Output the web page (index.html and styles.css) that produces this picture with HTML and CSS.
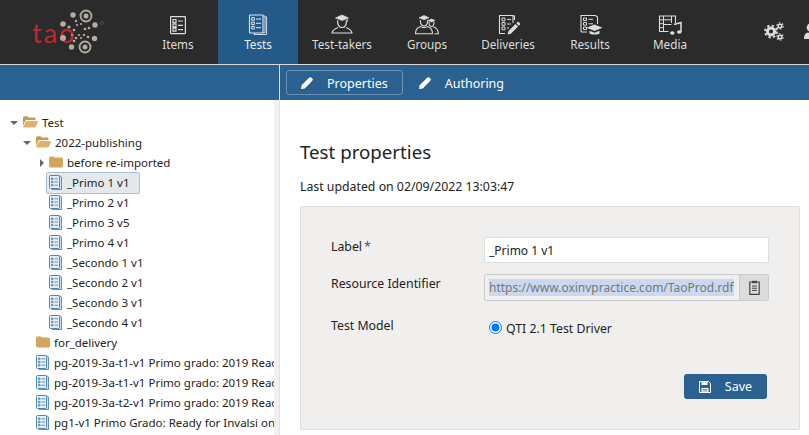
FILE: index.html
```html
<!DOCTYPE html>
<html lang="en">

<head>
  <meta charset="UTF-8">
  <meta name="viewport" content="width=device-width, initial-scale=1.0">
  <title>TAO - Tests</title>
  <link rel="stylesheet" href="styles.css">
</head>

<body>
  <!-- shared icons -->
  <svg class="defs" width="0" height="0">
    <symbol id="i-test" viewBox="0 0 13 15">
      <path d="M3 1h8l1.500 1v12.500H3z" fill="#cfe0ee" stroke="#5b8fb9"/>
      <rect x="0.500" y="0.500" width="10" height="13" rx="1" fill="#e8f0f6" stroke="#4f87b3"/>
      <path d="M2.500 3h1.500v1.500H2.500zM2.500 6.200h1.500v1.500H2.500zM2.500 9.400h1.500v1.500H2.500zM5.500 3.800h3.500M5.500 7h3.500M5.500 10.200h3.500" fill="none" stroke="#5b8fb9"/>
    </symbol>
    <symbol id="i-folder" viewBox="0 0 14 12">
      <path d="M0 2.200C0 1 .8.400 1.800.400h2.600c.8 0 1.200.9 2 1.200h5.800c1 0 1.800.7 1.800 1.800v6.400c0 1-.8 1.800-1.800 1.800H1.800C.8 11.600 0 10.800 0 9.800z" fill="#d2a65c"/>
    </symbol>
    <symbol id="i-folder-open" viewBox="0 0 15 12">
      <path d="M0 2C0 1 .7.300 1.600.300h2.500c.8 0 1.300.9 2 1.200h5c.9 0 1.500.6 1.500 1.500V4H4.200C3 4 2.300 4.700 1.900 5.700L0 10z" fill="#c99a4e"/>
      <path d="M4.400 5H14c.7 0 1.100.6.800 1.200l-2 4.500c-.3.6-.8.9-1.500.9H1c-.6 0-1-.5-.7-1.100l2.400-4.400C3 5.300 3.600 5 4.400 5z" fill="#dcb26c"/>
    </symbol>
    <symbol id="i-pencil" viewBox="0 0 12 12">
      <path d="M0 12l.6-3.800L7.400 1.400l3.200 3.200-6.800 6.800zM8.400.6c.6-.6 1.300-.6 1.800-.1l1.300 1.300c.5.500.5 1.200-.1 1.800l-.9.900L7.300 1.700z" fill="#fff"/>
    </symbol>
  </svg>

  <header class="topbar">
    <a class="logo" href="#">
      <svg width="110" height="64" viewBox="0 0 110 64">
        <text x="32" y="43" class="logo-text">tao</text>
        <g fill="none" stroke="#b5aca0">
          <circle cx="86" cy="16" r="5.500" stroke-width="1.800"/>
          <circle cx="85" cy="47" r="5.500" stroke-width="1.800"/>
        </g>
        <g fill="#b5aca0">
          <circle cx="86" cy="16" r="2.500"/>
          <circle cx="85" cy="47" r="2.500"/>
          <circle cx="63" cy="38" r="3"/>
          <circle cx="73" cy="15" r="2.700"/>
          <circle cx="63" cy="24" r="2.800"/>
          <circle cx="95" cy="25" r="2.700"/>
          <circle cx="94.500" cy="38.500" r="2.700"/>
          <circle cx="71.500" cy="47" r="2.700"/>
          <circle cx="69" cy="27" r="1.600"/>
          <circle cx="74" cy="30" r="1.300"/>
          <circle cx="76" cy="21" r="1.200"/>
          <circle cx="77" cy="25" r="1.100"/>
          <circle cx="85" cy="29" r="1.300"/>
          <circle cx="89" cy="28" r="1.300"/>
          <circle cx="81" cy="24" r="1.100"/>
          <circle cx="84" cy="35" r="1.200"/>
          <circle cx="88" cy="37" r="1.300"/>
          <circle cx="72" cy="35" r="1.100"/>
          <circle cx="76" cy="38" r="1.300"/>
          <circle cx="74" cy="41" r="1.300"/>
          <circle cx="79" cy="35" r="1.100"/>
          <circle cx="81" cy="38" r="1.100"/>
        </g>
        <circle cx="102" cy="23" r="1.500" fill="none" stroke="#5c5c5c" stroke-width=".7"/>
      </svg>
    </a>
    <nav class="main-nav">
      <a class="nav-item w-80" href="#">
        <svg class="nav-icon" width="26" height="22" viewBox="0 0 26 22">
          <g fill="none" stroke="#ddd" stroke-width="1.200">
            <rect x="5.600" y="2.600" width="14.800" height="17" rx=".5"/>
            <path d="M8 5.500h3v3H8zM8 9.800h3v3H8zM8 14.200h3v3H8zM13 7h5M13 11.300h5M13 15.700h5"/>
          </g>
        </svg>
        Items
      </a>
      <a class="nav-item w-80 active" href="#">
        <svg class="nav-icon" width="26" height="22" viewBox="0 0 26 22">
          <path d="M20 3h1.600v17.500H9V19" fill="none" stroke="#cfdde9"/>
          <path d="M18 2h2v16.500H18" fill="none" stroke="#cfdde9"/>
          <rect x="4.500" y="1" width="13.500" height="18" rx=".5" fill="#245a87" stroke="#dde7f0" stroke-width="1.100"/>
          <path d="M6.700 3.600h2.600v2.600H6.700zM6.700 8h2.600v2.600H6.700zM6.700 12.400h2.600V15H6.700zM11 5h5M11 9.300h5M11 13.700h5" fill="none" stroke="#dde7f0"/>
        </svg>
        Tests
      </a>
      <a class="nav-item w-88" href="#">
        <svg class="nav-icon" width="26" height="22" viewBox="0 0 26 22">
          <path d="M13 1l6.500 3-6.500 2.500L6.500 4zM18.500 4.800v3" fill="#ddd" stroke="#ddd" stroke-width=".7"/>
          <path d="M8.500 6.200c0 5 1.800 7.300 4.500 7.300s4.500-2.300 4.500-7.300" fill="none" stroke="#ddd" stroke-width="1.200"/>
          <path d="M9 13.500c-2 .8-5.500 2.500-6 5.500h20c-.5-3-4-4.700-6-5.500M13 17.500" fill="none" stroke="#ddd" stroke-width="1.200"/>
        </svg>
        Test-takers
      </a>
      <a class="nav-item w-82" href="#">
        <svg class="nav-icon" width="26" height="22" viewBox="0 0 26 22">
          <path d="M10 1.500l5 2.300-5 2-5-2zM17.500 5l3.600 1.500L17.500 8 14 6.500z" fill="#ddd" stroke="#ddd" stroke-width=".6"/>
          <path d="M6.300 6c0 4 1.500 6 3.700 6s3.700-2 3.700-6M15 8c0 3 1 4.500 2.500 4.500S20 11 20 8" fill="none" stroke="#ddd" stroke-width="1.100"/>
          <path d="M1.500 19.800c0-3.800 2.400-6.300 5-7.200 2 1.200 5 1.200 7 0 2.600.9 5 3.400 5 7.200zM19.500 13c2.700.6 4.700 2.800 5 6.800h-4" fill="none" stroke="#ddd" stroke-width="1.100"/>
        </svg>
        Groups
      </a>
      <a class="nav-item w-80" href="#">
        <svg class="nav-icon" width="26" height="22" viewBox="0 0 26 22">
          <path d="M18 9V2h1.500v4M10 19.500H4.500V1.500H18v1M16 19.500h-2" fill="none" stroke="#ddd" stroke-width="1.100"/>
          <path d="M7 4h3v2.800H7zM7 8.500h3v2.800H7zM7 13h3v2.800H7zM12 5.400h4M12 10h4M12 14h2" fill="none" stroke="#ddd"/>
          <path d="M12.500 20.500l1-3.500 7-7 2.600 2.600-7 7zM21.300 9.200l1-1c.5-.5 1-.5 1.500 0l1 1c.5.500.5 1 0 1.500l-1 1z" fill="#ddd"/>
        </svg>
        Deliveries
      </a>
      <a class="nav-item w-84" href="#">
        <svg class="nav-icon" width="28" height="22" viewBox="0 0 28 22">
          <path d="M5 18V1.500h14.500l2 1.500V10" fill="none" stroke="#ddd" stroke-width="1.100"/>
          <path d="M7.500 4h3v2.600h-3zM7.500 8.500h3v2.600h-3zM7.500 13h3v2.500h-3zM12.500 5.300h4.500M12.500 9.800h4.500" fill="none" stroke="#ddd"/>
          <path d="M18.500 10.500l8 3.200-8 3.300-8-3.300z" fill="#ddd"/>
          <path d="M13.500 16.800v2.600c1.500 1.400 8.500 1.400 10 0v-2.600l-5 2z" fill="#ddd"/>
          <path d="M5 18h6" fill="none" stroke="#ddd"/>
        </svg>
        Results
      </a>
      <a class="nav-item w-76" href="#">
        <svg class="nav-icon" width="26" height="22" viewBox="0 0 26 22">
          <path d="M18.500 9V2H2.500v15.500h9" fill="none" stroke="#ddd" stroke-width="1.100"/>
          <path d="M6.500 2v15.500M14.500 2v7M2.500 5.800h4M2.500 9.700h4M2.500 13.600h4M6.500 5.800h8M6.500 10.500h8" fill="none" stroke="#ddd"/>
          <path d="M17 10.500l7-2v9.500" fill="none" stroke="#ddd" stroke-width="1.500"/>
          <ellipse cx="15.300" cy="19" rx="2.300" ry="1.800" fill="#ddd"/>
          <ellipse cx="22.300" cy="18" rx="2.300" ry="1.800" fill="#ddd"/>
        </svg>
        Media
      </a>
    </nav>
    <div class="top-tools">
      <svg width="24" height="22" viewBox="0 0 24 22">
        <circle cx="9" cy="10.500" r="3.600" fill="none" stroke="#ddd" stroke-width="3"/>
        <circle cx="9" cy="10.500" r="6" fill="none" stroke="#ddd" stroke-width="1.800" stroke-dasharray="2.400 2.310"/>
        <circle cx="18" cy="5" r="1.800" fill="none" stroke="#ddd" stroke-width="1.500"/>
        <circle cx="18" cy="5" r="3.200" fill="none" stroke="#ddd" stroke-width="1.100" stroke-dasharray="1.700 1.650"/>
        <circle cx="18" cy="16" r="1.800" fill="none" stroke="#ddd" stroke-width="1.500"/>
        <circle cx="18" cy="16" r="3.200" fill="none" stroke="#ddd" stroke-width="1.100" stroke-dasharray="1.700 1.650"/>
      </svg>
      <svg width="16" height="22" viewBox="0 0 16 22">
        <circle cx="8" cy="6.500" r="4.300" fill="#ddd"/>
        <path d="M1 18c0-4.500 2-6 4-6.500 2 1.300 4.500 1.300 6.500 0 2 .5 4.500 2 4.500 6.500z" fill="#ddd"/>
      </svg>
    </div>
  </header>

  <div class="action-bar">
    <div class="action-spacer"></div>
    <div class="actions">
      <a class="action-btn active" href="#">
        <svg width="12" height="12"><use href="#i-pencil"/></svg>
        Properties
      </a>
      <a class="action-btn" href="#">
        <svg width="12" height="12"><use href="#i-pencil"/></svg>
        Authoring
      </a>
    </div>
  </div>

  <div class="workspace">
    <aside class="sidebar">
      <ul class="tree">
        <li class="row lvl-0"><span class="caret down"></span><svg class="ico-folder" width="15" height="12"><use href="#i-folder-open"/></svg>Test</li>
        <li class="row lvl-1"><span class="caret down"></span><svg class="ico-folder" width="15" height="12"><use href="#i-folder-open"/></svg>2022-publishing</li>
        <li class="row lvl-2"><span class="caret right"></span><svg class="ico-folder" width="14" height="12"><use href="#i-folder"/></svg>before re-imported</li>
        <li class="row lvl-3 selected"><svg class="ico-test" width="13" height="15"><use href="#i-test"/></svg>_Primo 1 v1</li>
        <li class="row lvl-3"><svg class="ico-test" width="13" height="15"><use href="#i-test"/></svg>_Primo 2 v1</li>
        <li class="row lvl-3"><svg class="ico-test" width="13" height="15"><use href="#i-test"/></svg>_Primo 3 v5</li>
        <li class="row lvl-3"><svg class="ico-test" width="13" height="15"><use href="#i-test"/></svg>_Primo 4 v1</li>
        <li class="row lvl-3"><svg class="ico-test" width="13" height="15"><use href="#i-test"/></svg>_Secondo 1 v1</li>
        <li class="row lvl-3"><svg class="ico-test" width="13" height="15"><use href="#i-test"/></svg>_Secondo 2 v1</li>
        <li class="row lvl-3"><svg class="ico-test" width="13" height="15"><use href="#i-test"/></svg>_Secondo 3 v1</li>
        <li class="row lvl-3"><svg class="ico-test" width="13" height="15"><use href="#i-test"/></svg>_Secondo 4 v1</li>
        <li class="row lvl-4"><svg class="ico-folder" width="14" height="12"><use href="#i-folder"/></svg>for_delivery</li>
        <li class="row lvl-4"><svg class="ico-test" width="13" height="15"><use href="#i-test"/></svg>pg-2019-3a-t1-v1 Primo grado: 2019 Ready for Invalsi</li>
        <li class="row lvl-4"><svg class="ico-test" width="13" height="15"><use href="#i-test"/></svg>pg-2019-3a-t1-v1 Primo grado: 2019 Ready for Invalsi</li>
        <li class="row lvl-4"><svg class="ico-test" width="13" height="15"><use href="#i-test"/></svg>pg-2019-3a-t2-v1 Primo grado: 2019 Ready for Invalsi</li>
        <li class="row lvl-4"><svg class="ico-test" width="13" height="15"><use href="#i-test"/></svg>pg1-v1 Primo Grado: Ready for Invalsi online</li>
      </ul>
      <div class="scrollbar"></div>
    </aside>

    <main class="content">
      <h2>Test properties</h2>
      <p class="updated">Last updated on 02/09/2022 13:03:47</p>
      <form class="panel">
        <div class="field label-field">
          <label>Label<abbr>*</abbr></label>
          <input class="text-input" type="text" value="_Primo 1 v1">
        </div>
        <div class="field id-field">
          <label>Resource Identifier</label>
          <div class="id-box">
            <span class="id-value"><span class="sel">https://www.oxinvpractice.com/TaoProd.rdf</span></span>
            <span class="clip-btn">
              <svg width="11" height="15" viewBox="0 0 11 15">
                <path d="M3 2H.8v12.300h9.400V2H8" fill="none" stroke="#444" stroke-width="1.200"/>
                <rect x="3" y=".8" width="5" height="2.400" fill="#444"/>
                <path d="M3 6h5M3 8.200h5M3 10.400h5" stroke="#444"/>
              </svg>
            </span>
          </div>
        </div>
        <div class="field model-field">
          <label>Test Model</label>
          <div class="radio-line">
            <input class="radio" type="radio" checked>
            <span>QTI 2.1 Test Driver</span>
          </div>
        </div>
        <div class="form-foot">
          <button class="save-btn" type="button">
            <svg width="12" height="12" viewBox="0 0 12 12">
              <path d="M.5.500h9l2 2v9H.5z" fill="none" stroke="#fff"/>
              <path d="M2.500 1h6v3h-6zM2.500 7h7v4h-7z" fill="#fff"/>
              <path d="M3.500 8.500h5M3.500 10h5" stroke="#2a6190" stroke-width=".7"/>
            </svg>
            Save
          </button>
        </div>
      </form>
    </main>
  </div>
</body>

</html>
```

FILE: styles.css
```css
* {
  box-sizing: border-box;
}

html, body {
  margin: 0;
  height: 435px;
  overflow: hidden;
}

body {
  font-family: "Noto Sans", sans-serif;
  font-size: 12px;
  color: #222;
  background: #fff;
}

a {
  color: inherit;
  text-decoration: none;
}

.defs {
  display: block;
  height: 0;
}

/* top bar */
.topbar {
  display: flex;
  height: 64px;
  background: #2b2b2b;
  color: #ddd;
}

.logo {
  width: 138px;
  flex: none;
}

.logo svg {
  display: block;
}

.logo-text {
  font-family: "Lato", sans-serif;
  font-size: 27px;
  letter-spacing: 2px;
  fill: #c0272d;
}

.main-nav {
  display: flex;
  flex: 1;
}

.nav-item {
  display: flex;
  flex-direction: column;
  align-items: center;
  padding-top: 14px;
  font-size: 11.700px;
  line-height: 16px;
}

.nav-icon {
  display: block;
}

.w-76 { width: 76px; }
.w-80 { width: 80px; }
.w-82 { width: 82px; }
.w-84 { width: 84px; }
.w-88 { width: 88px; }

.nav-item.active {
  background: #245a87;
  color: #eee;
}

.top-tools {
  display: flex;
  flex: none;
  gap: 17px;
  align-items: center;
  width: 47px;
  overflow: hidden;
}

.top-tools svg {
  flex: none;
}

/* action bar */
.action-bar {
  display: flex;
  height: 36px;
  border-top: 1px solid #d8d8d8;
  background: #2a6190;
}

.action-spacer {
  width: 280px;
  border-right: 1px solid #d8e2ea;
}

.actions {
  display: flex;
  gap: 1px;
  padding: 5px 6px;
}

.action-btn {
  display: flex;
  align-items: center;
  gap: 14px;
  height: 25px;
  padding: 1px 14px 0;
  border: 1px solid transparent;
  border-radius: 3px;
  color: #fff;
  font-size: 12.500px;
}

.action-btn.active {
  border-color: #6b93b4;
}

/* tree */
.workspace {
  display: flex;
  height: 335px;
}

.sidebar {
  display: flex;
  flex: none;
  width: 280px;
  border-right: 1px solid #e2e2e2;
  overflow: hidden;
}

.tree {
  flex: 1;
  min-width: 0;
  margin: 0;
  padding: 12px 0 0;
  list-style: none;
  overflow: hidden;
}

.row {
  display: flex;
  align-items: center;
  height: 20px;
  white-space: nowrap;
  font-size: 11.500px;
}

.lvl-0 { padding-left: 10px; }
.lvl-1 { padding-left: 23px; }
.lvl-2 { padding-left: 40px; }
.lvl-3 { padding-left: 49px; }
.lvl-4 { padding-left: 36px; }

.caret {
  flex: none;
  width: 0;
  height: 0;
  margin-right: 5px;
  border-style: solid;
}

.caret.down {
  margin-top: 2px;
  border-width: 4px 4px 0;
  border-color: #666 transparent transparent;
}

.caret.right {
  margin-top: 2px;
  border-width: 4px 0 4px 4px;
  border-color: transparent transparent transparent #666;
}

.ico-folder {
  flex: none;
  margin-right: 4px;
}

.ico-test {
  flex: none;
  margin-right: 5px;
}

.selected {
  position: relative;
}

.selected::before {
  content: "";
  position: absolute;
  z-index: -1;
  top: 0;
  left: 46px;
  width: 92px;
  height: 20px;
  border: 1px solid #a9c0d2;
  border-radius: 2px;
  background: #e3e9ed;
}

.scrollbar {
  flex: none;
  width: 5px;
  background: #f1f1f1;
}

/* main form */
.content {
  flex: 1;
  padding: 40px 9px 0 20px;
}

h2 {
  margin: 0;
  font-size: 18.700px;
  font-weight: 400;
  line-height: 24px;
  color: #222;
}

.updated {
  margin: 15px 0 11px;
  font-size: 12.300px;
  line-height: 16px;
}

.panel {
  height: 224px;
  padding: 30px 30px 0;
  border: 1px solid #ddd;
  border-radius: 2px;
  background: #f0efee;
}

.field {
  display: flex;
}

.field label {
  flex: none;
  width: 153px;
  font-size: 12.300px;
  line-height: 18px;
}

abbr {
  margin-left: 2px;
  color: #2a6190;
}

.label-field {
  height: 37px;
}

.label-field label {
  padding-top: 1px;
}

.id-field {
  height: 43px;
}

.id-field label {
  padding-top: 1px;
}

.text-input {
  width: 285px;
  height: 26px;
  padding: 0 4px;
  border: 1px solid #ddd;
  border-radius: 2px;
  background: #fff;
  color: #222;
  font: 12px "Noto Sans", sans-serif;
}

.id-box {
  display: flex;
  width: 285px;
  height: 27px;
  border: 1px solid #ccc;
  border-radius: 2px;
  background: #f0efee;
}

.id-value {
  flex: 1;
  min-width: 0;
  padding: 4px 4px 0;
  overflow: hidden;
  white-space: nowrap;
  color: #777;
  line-height: 17px;
}

.sel {
  background: #c9daf0;
}

.clip-btn {
  display: flex;
  flex: none;
  align-items: center;
  justify-content: center;
  width: 29px;
  border-left: 1px solid #ccc;
  background: #dcdcdc;
}

.radio-line {
  display: flex;
  align-items: center;
  height: 20px;
  margin-top: 1px;
  font-size: 12.300px;
}

.radio {
  width: 13px;
  height: 13px;
  margin: 0 4px 2px 5px;
}

.form-foot {
  display: flex;
  justify-content: flex-end;
  margin-top: 36px;
  padding-right: 2px;
}

.save-btn {
  display: flex;
  align-items: center;
  justify-content: center;
  gap: 14px;
  width: 83px;
  height: 25px;
  border: 0;
  border-radius: 3px;
  background: #2a6190;
  color: #fff;
  font: 12.500px "Noto Sans", sans-serif;
}
```
